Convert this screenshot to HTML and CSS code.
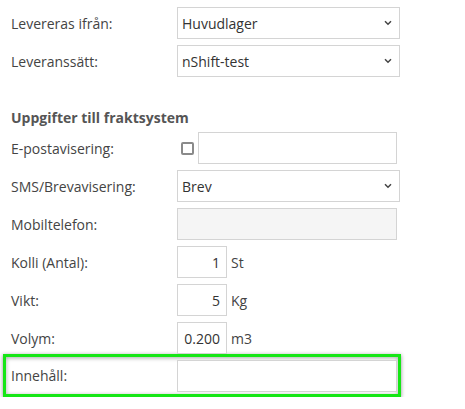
FILE: index.html
```html
<!DOCTYPE html>
<html lang="sv">
<head>
<meta charset="utf-8">
<link rel="stylesheet" href="styles.css">
</head>
<body>
<form class="form">
  <div class="row">
    <label class="label">Levereras ifrån:</label>
    <span class="select-wrap">
      <select class="select"><option>Huvudlager</option></select>
      <svg class="chev" width="8" height="6" viewBox="0 0 8 6"><path d="M1 1.2 L4 4.2 L7 1.2" fill="none" stroke="#444" stroke-width="1.5"/></svg>
    </span>
  </div>
  <div class="row">
    <label class="label">Leveranssätt:</label>
    <span class="select-wrap">
      <select class="select"><option>nShift-test</option></select>
      <svg class="chev" width="8" height="6" viewBox="0 0 8 6"><path d="M1 1.2 L4 4.2 L7 1.2" fill="none" stroke="#444" stroke-width="1.5"/></svg>
    </span>
  </div>

  <h3 class="heading">Uppgifter till fraktsystem</h3>

  <div class="row">
    <label class="label">E-postavisering:</label>
    <input type="checkbox" class="check">
    <input type="text" class="input input-email">
  </div>
  <div class="row">
    <label class="label">SMS/Brevavisering:</label>
    <span class="select-wrap">
      <select class="select"><option>Brev</option></select>
      <svg class="chev" width="8" height="6" viewBox="0 0 8 6"><path d="M1 1.2 L4 4.2 L7 1.2" fill="none" stroke="#444" stroke-width="1.5"/></svg>
    </span>
  </div>
  <div class="row">
    <label class="label">Mobiltelefon:</label>
    <input type="text" class="input input-wide input-disabled" disabled>
  </div>
  <div class="row">
    <label class="label">Kolli (Antal):</label>
    <input type="text" class="input input-num" value="1">
    <span class="unit">St</span>
  </div>
  <div class="row">
    <label class="label">Vikt:</label>
    <input type="text" class="input input-num" value="5">
    <span class="unit">Kg</span>
  </div>
  <div class="row">
    <label class="label">Volym:</label>
    <input type="text" class="input input-num" value="0.200">
    <span class="unit">m3</span>
  </div>
  <div class="row highlight">
    <label class="label">Innehåll:</label>
    <input type="text" class="input input-wide">
  </div>
</form>
</body>
</html>
```

FILE: styles.css
```css
* { box-sizing: border-box; }
html, body { margin: 0; padding: 0; background: #fff; }
body {
  font-family: "Open Sans", "Liberation Sans", sans-serif;
  font-size: 14px;
  color: #444;
}
.form {
  padding: 7px 0 0 11px;
}
.row {
  display: flex;
  align-items: center;
  height: 32px;
  margin-bottom: 6px;
}
.label {
  width: 166px;
  flex: none;
  color: #444;
  line-height: 19px;
}
.select-wrap {
  position: relative;
  display: block;
  width: 223px;
  height: 32px;
}
.select {
  appearance: none;
  -webkit-appearance: none;
  width: 100%;
  height: 32px;
  margin: 0;
  border: 1px solid #d4d4d4;
  border-radius: 0;
  background: #fff;
  padding: 0 20px 0 4px;
  font-family: inherit;
  font-size: 14px;
  color: #333;
}
.chev {
  position: absolute;
  right: 8px;
  top: 13px;
  pointer-events: none;
}
.heading {
  margin: 31px 0 5px 0;
  font-size: 14px;
  font-weight: 700;
  line-height: 19px;
  color: #555;
}
.input {
  height: 32px;
  margin: 0;
  border: 1px solid #d4d4d4;
  border-radius: 0;
  background: #fff;
  padding: 0 5px;
  font-family: inherit;
  font-size: 14px;
  color: #333;
  outline: none;
}
.check {
  appearance: none;
  -webkit-appearance: none;
  width: 13px;
  height: 13px;
  margin: 0 4px 0 4px;
  border: 2px solid #8a8a8a;
  border-radius: 2px;
  background: #fff;
  flex: none;
}
.input-email { width: 199px; }
.input-wide { width: 220px; }
.input-disabled { background: #f5f5f5; }
.input-num {
  width: 50px;
  text-align: right;
  padding-right: 6px;
}
.unit {
  margin-left: 4px;
  color: #444;
}
.highlight {
  width: 398px;
  height: 43px;
  margin: -6px 0 0 -8px;
  padding: 3px 1px 2px 5px;
  border: 3px solid #16e616;
  box-shadow: 0 1px 4px rgba(0, 0, 0, 0.45), inset 0 1px 4px rgba(0, 0, 0, 0.35);
  align-items: flex-start;
}
.highlight .label {
  line-height: 32px;
}
```
